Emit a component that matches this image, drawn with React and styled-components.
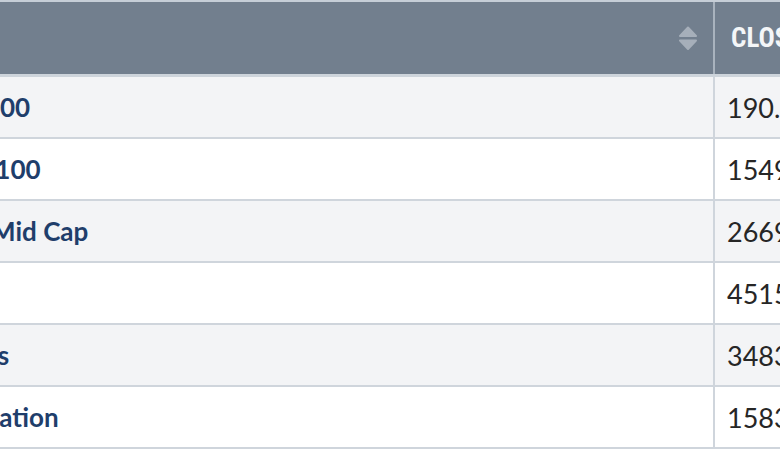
import React from 'react';
import styled, { createGlobalStyle } from 'styled-components';

const GlobalStyle = createGlobalStyle`
  html, body {
    margin: 0;
    padding: 0;
    background: #ffffff;
    overflow: hidden;
  }
`;

const Frame = styled.div`
  width: 780px;
  height: 452px;
  overflow: hidden;
  border-top: 2px solid #c6ced7;
  box-sizing: border-box;
`;

// the table is wider than the window, the name column starts off to the left
const Table = styled.div`
  margin-left: -259px;
  width: 1240px;
`;

const HeaderRow = styled.div`
  display: grid;
  grid-template-columns: 972px 1fr;
  height: 72px;
  background: #727f8e;
  border-bottom: 3px solid #cdd4db;
`;

const HeadCell = styled.div`
  display: flex;
  align-items: center;
  justify-content: space-between;
  padding: 0 16px;
  font-family: "Roboto Condensed", "DejaVu Sans Condensed", "Liberation Sans Narrow", Roboto, sans-serif;
  font-stretch: condensed;
  font-weight: 700;
  font-size: 27px;
  text-transform: uppercase;
  color: #f4f6f8;
  border-left: ${({ divider }) => (divider ? '2px solid #a9b3be' : 'none')};
`;

const Row = styled.div`
  display: grid;
  grid-template-columns: 972px 1fr;
  height: 60px;
  background: ${({ shaded }) => (shaded ? '#f3f4f6' : '#ffffff')};
  border-bottom: 2px solid #cfd5dc;
`;

const NameCell = styled.div`
  display: flex;
  align-items: center;
  padding: 0 16px;
  font-family: Lato, "Liberation Sans", sans-serif;
  font-weight: 700;
  font-size: 26px;
  color: #1f3e6b;
  white-space: nowrap;
`;

const CloseCell = styled.div`
  display: flex;
  align-items: center;
  padding: 0 12px;
  border-left: 2px solid #cfd5dc;
  font-family: Lato, "Liberation Sans", sans-serif;
  font-size: 27px;
  color: #262626;
  white-space: nowrap;
`;

const SortIcon = () => (
  <svg width="18" height="25" viewBox="0 0 18 25" fill="#a6afba" stroke="#a6afba" strokeWidth="2" strokeLinejoin="round">
    <path d="M9 1.5 L17 10 L1 10 Z" />
    <path d="M1 14.5 L17 14.5 L9 23 Z" />
  </svg>
);

const indexes = [
  { name: 'Russell Microcaps 2000', close: '190.45' },
  { name: 'NASDAQ Computer 100', close: '15490.31' },
  { name: 'Dow Jones US Total Mid Cap', close: '2669.78' },
  { name: 'S&P 500', close: '4515.21' },
  { name: 'Dow Jones Industrials', close: '34830.12' },
  { name: 'Dow Jones Transportation', close: '15830.66' },
];

export default function App() {
  return (
    <>
      <GlobalStyle />
      <Frame>
        <Table>
          <HeaderRow>
            <HeadCell>
              <span>Name</span>
              <SortIcon />
            </HeadCell>
            <HeadCell divider>Close</HeadCell>
          </HeaderRow>
          {indexes.map((row, i) => (
            <Row key={row.name} shaded={i % 2 === 0}>
              <NameCell>{row.name}</NameCell>
              <CloseCell>{row.close}</CloseCell>
            </Row>
          ))}
        </Table>
      </Frame>
    </>
  );
}
